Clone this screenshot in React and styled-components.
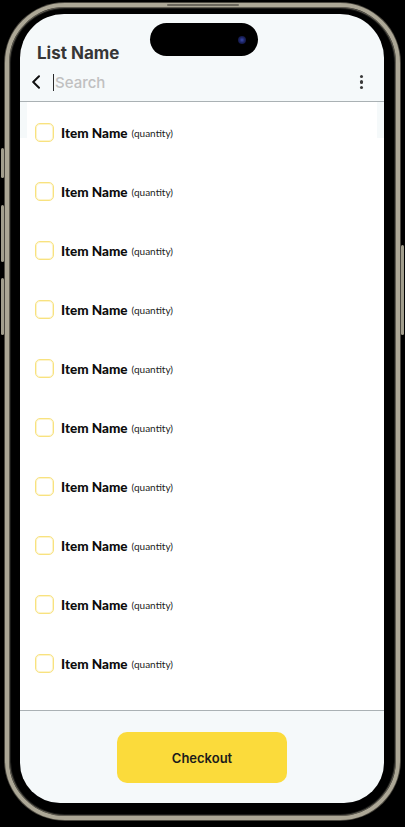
import React from "react";
import styled, { createGlobalStyle } from "styled-components";

const Global = createGlobalStyle`
  html, body { margin: 0; padding: 0; background: #000; }
  body { font-family: Inter, "Noto Sans", sans-serif; width: 405px; height: 827px; overflow: hidden; }
  * { box-sizing: border-box; }
`;

const Phone = styled.div`
  position: relative;
  margin: 3px 0 0 5px;
  width: 395px;
  height: 817px;
  border-radius: 60px;
  border: 4px solid #aca796;
  box-shadow: 0 0 0 1px #4a473f, inset 0 0 0 1px #5d5a50, inset 0 0 0 2px #1a1a18;
  background: #000;
  padding: 7px 12px 13px 11px;
`;

const SideButton = styled.div`
  position: absolute;
  top: ${(p) => p.$top}px;
  height: ${(p) => p.$h}px;
  width: 3px;
  ${(p) => (p.$right ? "right: -8px;" : "left: -8px;")}
  background: #a29e8d;
  border-radius: 2px;
`;

const Speaker = styled.div`
  position: absolute;
  top: -3px;
  left: 158px;
  width: 72px;
  height: 2px;
  background: #6a665b;
  border-radius: 1px;
`;

const Screen = styled.div`
  position: relative;
  width: 364px;
  height: 789px;
  border-radius: 44px 44px 40px 40px;
  overflow: hidden;
  background: #f5f9fa;
  display: flex;
  flex-direction: column;
`;

const Island = styled.div`
  position: absolute;
  top: 9px;
  left: 130px;
  width: 108px;
  height: 33px;
  border-radius: 17px;
  background: #000;
  display: flex;
  align-items: center;
  justify-content: flex-end;
  padding-right: 12px;
`;

const Camera = styled.div`
  width: 8px;
  height: 8px;
  border-radius: 50%;
  background: radial-gradient(circle, #3a4aa8 0%, #1c2466 45%, #0a0c1e 100%);
`;

const Header = styled.header`
  height: 87px;
  padding: 29px 21px 0 11px;
  display: flex;
  flex-direction: column;
  flex-shrink: 0;
`;

const Title = styled.h1`
  margin: 0;
  padding-left: 6px;
  font-size: 17px;
  line-height: 20px;
  font-weight: 700;
  color: #363636;
`;

const SearchRow = styled.div`
  margin-top: 5px;
  height: 28px;
  display: flex;
  align-items: center;
`;

const BackIcon = styled.svg`
  width: 10px;
  height: 14px;
  flex-shrink: 0;
`;

const SearchText = styled.span`
  margin-left: 12px;
  flex: 1;
  font-size: 15px;
  line-height: 17px;
  font-weight: 500;
  color: #c0c0c0;
  border-left: 1px solid #2a2a2a;
  padding-left: 1px;
`;

const Kebab = styled.div`
  display: flex;
  flex-direction: column;
  gap: 2px;
`;

const Dot = styled.span`
  width: 3.5px;
  height: 3.5px;
  border-radius: 50%;
  background: #3a3a3a;
`;

const Divider = styled.div`
  height: 1px;
  background: #aab1b4;
  flex-shrink: 0;
`;

const ListArea = styled.div`
  flex: 1;
  padding-top: 1px;
  background:
    linear-gradient(to right, #f5f9fa 7px, transparent 7px, transparent calc(100% - 7px), #f5f9fa calc(100% - 7px)) top / 100% 36px no-repeat,
    #fff;
  display: flex;
  flex-direction: column;
`;

const Row = styled.div`
  height: 59px;
  display: flex;
  align-items: center;
  padding-left: 15px;
`;

const Check = styled.span`
  width: 19px;
  height: 19px;
  border-radius: 5px;
  border: 1px solid #f8e27f;
  box-shadow: inset 0 0 0 1px rgba(252, 236, 170, 0.6);
  background: #fff;
  flex-shrink: 0;
`;

const ItemName = styled.span`
  margin-left: 7px;
  font-family: Lato, "Noto Sans", sans-serif;
  font-weight: 900;
  font-size: 13.5px;
  color: #0d0d0d;
`;

const Qty = styled.span`
  margin-left: 4px;
  font-family: Lato, "Noto Sans", sans-serif;
  font-size: 10px;
  color: #222;
`;

const Footer = styled.footer`
  height: 92px;
  flex-shrink: 0;
  display: flex;
  justify-content: center;
  padding-top: 21px;
`;

const CheckoutButton = styled.button`
  width: 170px;
  height: 51px;
  border: none;
  border-radius: 10px;
  background: #fbdb3b;
  font-family: Inter, sans-serif;
  font-size: 13px;
  font-weight: 600;
  color: #1c1c1c;
  cursor: pointer;
`;

const items = Array.from({ length: 10 }, (_, i) => i);

export default function App() {
  return (
    <>
      <Global />
      <Phone>
        <Speaker />
        <SideButton $top={141} $h={30} />
        <SideButton $top={198} $h={57} />
        <SideButton $top={271} $h={57} />
        <SideButton $right $top={238} $h={90} />
        <Screen>
          <Island>
            <Camera />
          </Island>
          <Header>
            <Title>List Name</Title>
            <SearchRow>
              <BackIcon viewBox="0 0 10 14">
                <path d="M8 1.2 L2.2 7 L8 12.8" fill="none" stroke="#111" strokeWidth="2" strokeLinecap="round" strokeLinejoin="round" />
              </BackIcon>
              <SearchText>Search</SearchText>
              <Kebab>
                <Dot />
                <Dot />
                <Dot />
              </Kebab>
            </SearchRow>
          </Header>
          <Divider />
          <ListArea>
            {items.map((i) => (
              <Row key={i}>
                <Check />
                <ItemName>Item Name</ItemName>
                <Qty>(quantity)</Qty>
              </Row>
            ))}
          </ListArea>
          <Divider />
          <Footer>
            <CheckoutButton>Checkout</CheckoutButton>
          </Footer>
        </Screen>
      </Phone>
    </>
  );
}
